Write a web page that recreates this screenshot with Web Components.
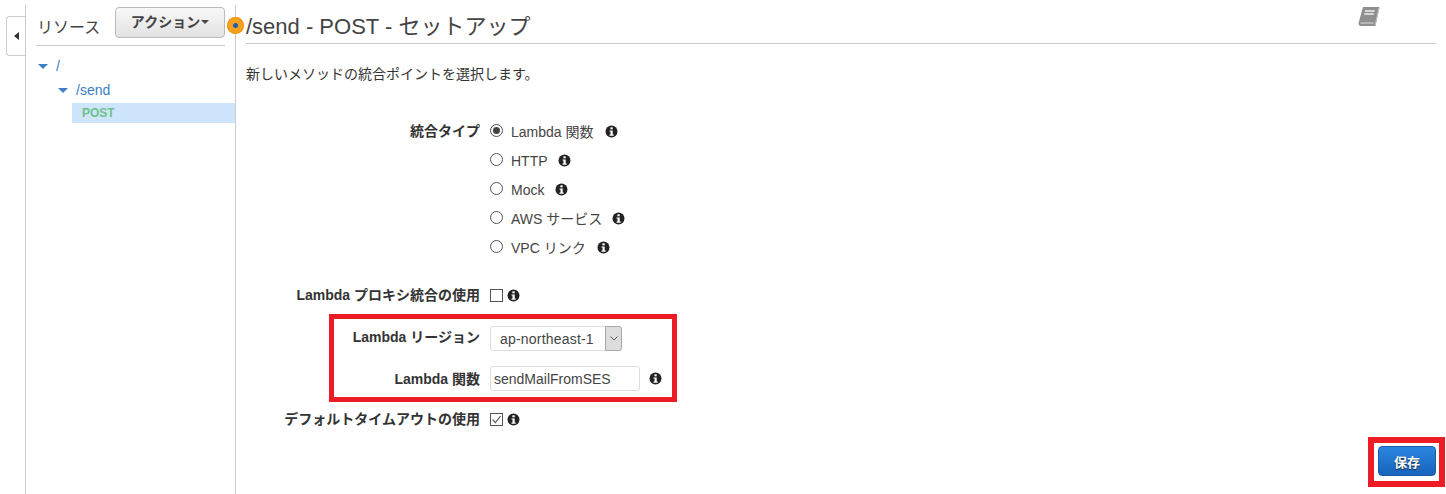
<!DOCTYPE html>
<html lang="ja">
<head>
<meta charset="utf-8">
<title>API Gateway</title>
<style>
  html, body { margin: 0; height: 494px; overflow: hidden; background: #fff; }
  body { font: 14px "Liberation Sans", "Noto Sans CJK JP", sans-serif; color: #444; }
</style>
</head>
<body>

<api-console>
  <resource-panel></resource-panel>
  <method-setup></method-setup>
</api-console>

<script>
const INFO = `<svg width="13" height="13" viewBox="0 0 13 13"><circle cx="6.5" cy="6.5" r="6" fill="#222"/><rect x="5.4" y="2.3" width="2.3" height="2" fill="#fff"/><path d="M4.5 5.4h3.2v4.2h1v1.1H4.5V9.6h1V6.5h-1z" fill="#fff"/></svg>`;

class ApiConsole extends HTMLElement {
    constructor() {
        super();
        this.attachShadow({ mode: "open" });
        this.shadowRoot.innerHTML = `
            <style>
                :host { display: flex; height: 494px; position: relative; }
                #strip { width: 25px; margin-top: 5px; border-right: 1px solid #ccc; flex: none; box-sizing: content-box; padding-top: 11px; }
                #tab {
                    width: 18px; height: 38px; margin-left: 6px; margin-right: -1px;
                    border: 1px solid #ccc; border-right: 0; border-radius: 4px 0 0 4px;
                    background: #fff; position: relative; display: flex; align-items: center; justify-content: center;
                }
                #tab i { width: 0; height: 0; border: 4px solid transparent; border-left: 0; border-right: 5px solid #333; }
            </style>
            <div id="strip"><div id="tab"><i></i></div></div>
            <slot></slot>
        `;
    }
}

class ResourcePanel extends HTMLElement {
    constructor() {
        super();
        this.attachShadow({ mode: "open" });
        this.shadowRoot.innerHTML = `
            <style>
                :host { display: block; width: 209px; flex: none; margin-top: 5px; border-right: 1px solid #ccc; position: relative; }
                header { display: flex; justify-content: space-between; align-items: center; margin: 1px 10px 0 10px; height: 39px; border-bottom: 1px solid #ccc; }
                h2 { font-size: 16px; font-weight: 400; color: #444; margin: 1px 0 0 1px; }
                button {
                    font: bold 14px "Liberation Sans", "Noto Sans CJK JP", sans-serif; color: #444;
                    width: 110px; height: 31px; padding: 0 0 2px; margin-top: -7px;
                    border: 1px solid #bbb; border-radius: 4px;
                    background: linear-gradient(#f8f8f8, #e2e2e2);
                    display: flex; align-items: center; justify-content: center; gap: 1px;
                }
                button i { width: 0; height: 0; border: 4px solid transparent; border-top: 4px solid #444; border-bottom: 0; position: relative; top: 1px; }
                ul { list-style: none; margin: 0; padding: 0; font-size: 14px; color: #3b7ec4; }
                li { display: flex; align-items: center; height: 24px; }
                li i { width: 0; height: 0; border: 5.5px solid transparent; border-top: 5px solid #3f7fca; border-bottom: 0; margin-right: 8px; }
                #root { margin-top: 8px; padding-left: 12px; }
                #send { padding-left: 32px; }
                #post {
                    height: 20px; margin: 1px 0 0 46px; padding-left: 10px;
                    background: #cfe5fb; color: #6cc38a; font-size: 12px; font-weight: bold;
                }
            </style>
            <header>
                <h2>リソース</h2>
                <button>アクション<i></i></button>
            </header>
            <ul>
                <li id="root"><i></i>/</li>
                <li id="send"><i></i>/send</li>
                <li id="post">POST</li>
            </ul>
        `;
    }
}

class InfoIcon extends HTMLElement {
    constructor() {
        super();
        this.attachShadow({ mode: "open" });
        this.shadowRoot.innerHTML = `
            <style>:host { display: inline-flex; flex: none; } svg { display: block; }</style>
            ${INFO}
        `;
    }
}

class FormRow extends HTMLElement {
    constructor() {
        super();
        this.attachShadow({ mode: "open" });
        this.shadowRoot.innerHTML = `
            <style>
                :host { display: grid; grid-template-columns: 234px 1fr; column-gap: 10px; align-items: center; line-height: 20px; }
                label { text-align: right; font-weight: bold; font-size: 14px; color: #333; white-space: nowrap; }
                div { display: flex; align-items: center; }
            </style>
            <label><slot name="label"></slot></label>
            <div><slot></slot></div>
        `;
    }
}

class RadioOption extends HTMLElement {
    constructor() {
        super();
        this.attachShadow({ mode: "open" });
        const on = this.hasAttribute("checked");
        const gap = this.getAttribute("gap") || 11;
        this.shadowRoot.innerHTML = `
            <style>
                :host { display: flex; align-items: center; height: 29px; font-size: 14px; color: #444; line-height: 20px; }
                #r { width: 11px; height: 11px; border: 1px solid #555; border-radius: 50%; margin-right: 8px; display: flex; align-items: center; justify-content: center; position: relative; top: -1px; }
                #r b { width: 7px; height: 7px; border-radius: 50%; background: #444; }
                info-icon { margin-left: ${gap}px; }
            </style>
            <span id="r">${on ? "<b></b>" : ""}</span>
            <span><slot></slot></span>
            <info-icon></info-icon>
        `;
    }
}

class CheckField extends HTMLElement {
    constructor() {
        super();
        this.attachShadow({ mode: "open" });
        const on = this.hasAttribute("checked");
        this.shadowRoot.innerHTML = `
            <style>
                :host { display: inline-flex; align-items: center; gap: 4px; }
                svg { display: block; }
            </style>
            <svg width="13" height="13" viewBox="0 0 13 13">
                <rect x=".5" y=".5" width="12" height="12" fill="#fff" stroke="#555"/>
                ${on ? '<path d="M2.6 6.6l2.8 3L10.6 3" fill="none" stroke="#555" stroke-width="1.2"/>' : ""}
            </svg>
            <info-icon></info-icon>
        `;
    }
}

class MethodSetup extends HTMLElement {
    constructor() {
        super();
        this.attachShadow({ mode: "open" });
        this.shadowRoot.innerHTML = `
            <style>
                :host { display: block; flex: 1; padding: 0 10px 0 10px; position: relative; }
                header { display: flex; align-items: center; justify-content: space-between; height: 44px; border-bottom: 1px solid #ccc; box-sizing: border-box; }
                h1 { font-size: 22px; font-weight: 400; color: #444; margin: 0; position: relative; top: 2px; }
                #book { margin-right: 55px; position: relative; top: -5px; }
                p { margin: 20px 0 0; font-size: 14px; color: #333; line-height: 20px; }
                #form { margin-top: 33px; }
                .gap1 { margin-top: 23px; }
                #region { margin-top: 21px; }
                #fn { margin-top: 15px; }
                #def { margin-top: 18px; }
                select {
                    appearance: none; width: 132px; height: 25px; padding: 0; border: 1px solid #ddd; border-radius: 3px;
                    background: #fff; font: 14px "Liberation Sans", sans-serif; letter-spacing: .2px; color: #444; padding-left: 9px; display: block;
                }
                #sel { display: flex; }
                #arrow { width: 17px; height: 25px; box-sizing: border-box; margin-left: -17px; background: #ddd; border: 1px solid #aaa; border-radius: 0 3px 3px 0; display: flex; align-items: center; justify-content: center; }
                #name { width: 150px; height: 25px; box-sizing: border-box; border: 1px solid #ddd; border-radius: 3px; font: 14px "Liberation Sans", sans-serif; color: #444; padding: 0 3px; display: block; }
                #name + info-icon { margin-left: 9px; }
                #mark {
                    position: absolute; left: -9px; top: 17px; width: 17px; height: 17px; border-radius: 50%;
                    background: #f7a11f; box-shadow: inset 0 0 0 1px #ee9613; display: flex; align-items: center; justify-content: center;
                }
                #mark b { width: 5px; height: 5px; border-radius: 50%; background: #1f5fb0; }
                .hl { position: absolute; border: 5px solid #ed1c24; box-sizing: border-box; pointer-events: none; }
                #hl1 { left: 93px; top: 314px; width: 348px; height: 88px; }
                #hl2 { left: 1132px; top: 437px; width: 77px; height: 50px; border-width: 6px; }
                #save {
                    position: absolute; left: 1142px; top: 446px; width: 58px; height: 30px;
                    font: bold 13px "Liberation Sans", "Noto Sans CJK JP", sans-serif; color: #fff; text-shadow: 0 1px 1px #123;
                    border: 1px solid #1a5ca8; border-radius: 4px; background: linear-gradient(#2b86e0, #1763bb); padding: 0;
                }
            </style>
            <span id="mark"><b></b></span>
            <header>
                <h1>/send - POST - セットアップ</h1>
                <svg id="book" width="23" height="21" viewBox="0 0 23 21">
                    <path d="M5 1h16.500l-4 19H3C1 20 .2 18.500.7 16.500z" fill="#8f8f8f"/>
                    <path d="M21 2l-3.800 17" stroke="#c4c4c4" stroke-width="1" fill="none"/>
                    <path d="M7 5h9.500M6.300 8h9.500" stroke="#eee" stroke-width="1.500"/>
                    <path d="M2.500 17h13" stroke="#ddd" stroke-width="1"/>
                </svg>
            </header>
            <p>新しいメソッドの統合ポイントを選択します。</p>
            <div id="form">
                <form-row>
                    <span slot="label" style="position:relative;top:-59px">統合タイプ</span>
                    <div style="display:flex;flex-direction:column">
                        <radio-option checked gap="12">Lambda 関数</radio-option>
                        <radio-option gap="10">HTTP</radio-option>
                        <radio-option>Mock</radio-option>
                        <radio-option gap="10">AWS サービス</radio-option>
                        <radio-option>VPC リンク</radio-option>
                    </div>
                </form-row>
                <form-row class="gap1">
                    <span slot="label">Lambda プロキシ統合の使用</span>
                    <check-field></check-field>
                </form-row>
                <form-row id="region">
                    <span slot="label" style="position:relative;top:-2px">Lambda リージョン</span>
                    <div id="sel">
                        <select><option>ap-northeast-1</option></select>
                        <span id="arrow"><svg width="8" height="5" viewBox="0 0 8 5"><path d="M.5.5L4 4 7.500.5" fill="none" stroke="#555"/></svg></span>
                    </div>
                </form-row>
                <form-row id="fn">
                    <span slot="label">Lambda 関数</span>
                    <input id="name" value="sendMailFromSES"><info-icon></info-icon>
                </form-row>
                <form-row id="def">
                    <span slot="label">デフォルトタイムアウトの使用</span>
                    <check-field checked></check-field>
                </form-row>
            </div>
            <button id="save">保存</button>
            <div class="hl" id="hl1"></div>
            <div class="hl" id="hl2"></div>
        `;
    }
}

customElements.define("api-console", ApiConsole);
customElements.define("resource-panel", ResourcePanel);
customElements.define("info-icon", InfoIcon);
customElements.define("form-row", FormRow);
customElements.define("radio-option", RadioOption);
customElements.define("check-field", CheckField);
customElements.define("method-setup", MethodSetup);
</script>
</body>
</html>
